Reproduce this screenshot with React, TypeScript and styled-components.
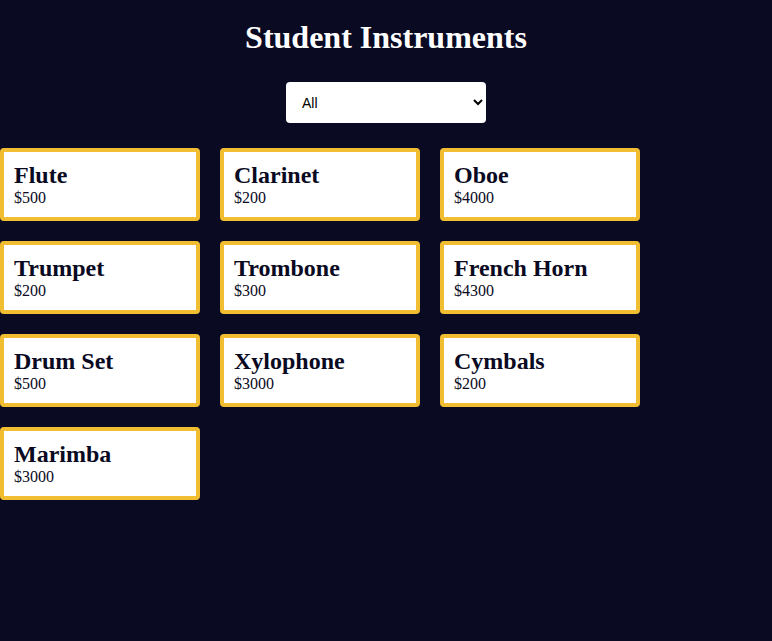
import React, {useState} from 'react';
import styled, {createGlobalStyle} from 'styled-components';

const COLORS = {
  background: '#0a0a23',
  gold: '#f1be32',
  white: '#ffffff',
  ink: '#0a0a23',
};

const GlobalStyle = createGlobalStyle`
  html, body {
    margin: 0;
    padding: 0;
    background: ${COLORS.background};
  }
  body {
    font-family: "Liberation Serif", "Times New Roman", serif;
    min-height: 641px;
  }
`;

const Page = styled.main`
  display: flex;
  flex-direction: column;
  align-items: center;
  padding-top: 19px;
`;

const Title = styled.h1`
  margin: 0;
  color: ${COLORS.white};
  font-size: 32px;
  line-height: 37px;
  font-weight: 700;
`;

const Filter = styled.select`
  margin-top: 26px;
  width: 200px;
  height: 41px;
  padding: 0 12px;
  border: none;
  border-radius: 4px;
  background: ${COLORS.white};
  color: #000;
  font-family: "Liberation Sans", Arial, sans-serif;
  font-size: 14px;
`;

const Grid = styled.ul`
  list-style: none;
  margin: 25px 0 0;
  padding: 0;
  align-self: stretch;
  display: grid;
  grid-template-columns: repeat(3, 200px);
  gap: 20px;
`;

const Card = styled.li`
  box-sizing: border-box;
  width: 200px;
  height: 73px;
  padding: 9px 10px;
  border: 4px solid ${COLORS.gold};
  border-radius: 4px;
  background: ${COLORS.white};
  color: ${COLORS.ink};
`;

const Name = styled.h2`
  margin: 0;
  font-size: 24px;
  line-height: 28px;
  font-weight: 700;
`;

const Price = styled.p`
  margin: 0;
  font-size: 16px;
  line-height: 18px;
`;

const instruments = [
  {category: 'woodwinds', instrument: 'Flute', price: 500},
  {category: 'woodwinds', instrument: 'Clarinet', price: 200},
  {category: 'woodwinds', instrument: 'Oboe', price: 4000},
  {category: 'brass', instrument: 'Trumpet', price: 200},
  {category: 'brass', instrument: 'Trombone', price: 300},
  {category: 'brass', instrument: 'French Horn', price: 4300},
  {category: 'percussion', instrument: 'Drum Set', price: 500},
  {category: 'percussion', instrument: 'Xylophone', price: 3000},
  {category: 'percussion', instrument: 'Cymbals', price: 200},
  {category: 'percussion', instrument: 'Marimba', price: 3000},
];

const App: React.FC = () => {
  const [category, setCategory] = useState('all');
  const shown = category === 'all' ? instruments : instruments.filter((i) => i.category === category);

  return (
    <>
      <GlobalStyle />
      <Page>
        <Title>Student Instruments</Title>
        <Filter value={category} onChange={(e) => setCategory(e.target.value)}>
          <option value="all">All</option>
          <option value="woodwinds">Woodwinds</option>
          <option value="brass">Brass</option>
          <option value="percussion">Percussion</option>
        </Filter>
        <Grid>
          {shown.map((i) => (
            <Card key={i.instrument}>
              <Name>{i.instrument}</Name>
              <Price>${i.price}</Price>
            </Card>
          ))}
        </Grid>
      </Page>
    </>
  );
};

export default App;
